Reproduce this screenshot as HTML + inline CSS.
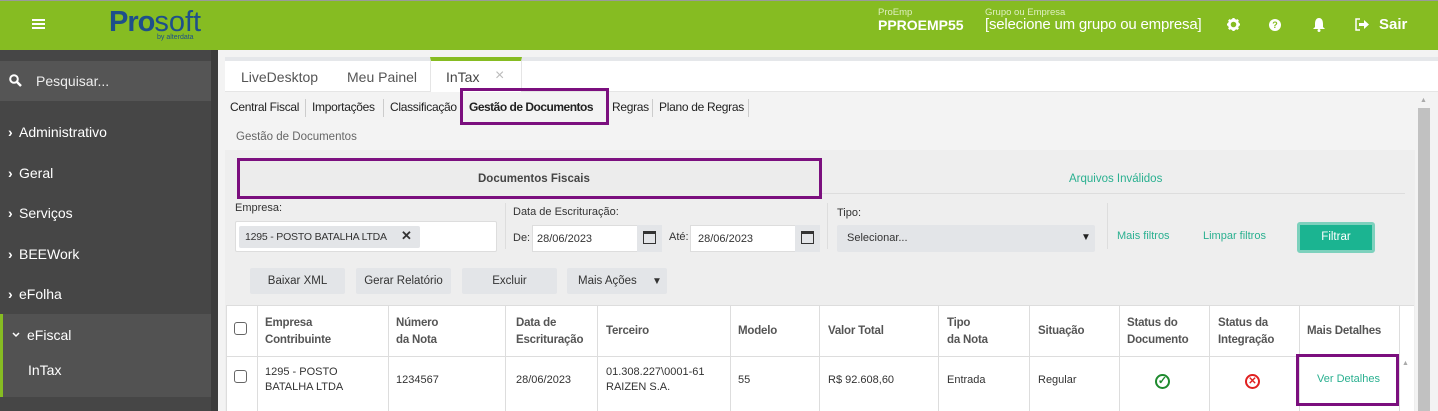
<!DOCTYPE html>
<html><head><meta charset="utf-8"><style>
*{margin:0;padding:0;box-sizing:border-box}
body{width:1438px;height:411px;overflow:hidden;position:relative;font-family:"Liberation Sans",sans-serif;background:#f3f3f3;color:#333}
.a{position:absolute}
.hdr{left:0;top:0;width:1438px;height:50px;background:#86bc22;border-top:1px solid #9a9a9a}
.side{left:0;top:50px;width:211px;height:361px;background:#464646}
.strip{left:211px;top:50px;width:7px;height:361px;background:#3c3c3c}
.nav{left:8px;color:#fff;font-size:14px}
.nav b{display:inline-block;width:11px;font-size:14px}
.w{color:#fff}
.sub{font-size:12px;color:#222;top:100px;letter-spacing:-0.3px}
.sep{width:1px;height:18px;background:#ccc;top:99px}
.th{font-size:11.5px;font-weight:bold;color:#555;line-height:17px;letter-spacing:-0.2px}
.td{font-size:11px;color:#333;line-height:15px}
.vl{width:1px;background:#ddd;top:305px;height:106px}
.btn{background:#e3e5e8;font-size:11.5px;color:#333;text-align:center;line-height:26px;height:26px;top:268px;border-radius:2px}
.cb{width:13px;height:13px;border:1px solid #666;border-radius:3px;background:#fff}
</style></head><body>
<div class="a hdr"></div>
<div class="a" style="left:32px;top:19px;width:13px;height:2px;background:#fff;box-shadow:0 4px 0 #fff,0 8px 0 #fff"></div>
<div class="a" style="left:109px;top:6px;font-size:29px;font-weight:bold;color:#1e4f8a;letter-spacing:-1px">Pro<span style="font-weight:normal;color:#1e4f8a;letter-spacing:0">soft</span></div>
<div class="a" style="left:157px;top:34px;font-size:7px;color:#1e4f8a">by alterdata</div>
<div class="a" style="left:878px;top:7px;font-size:9.5px;color:#dfefc0">ProEmp</div>
<div class="a w" style="left:878px;top:17px;font-size:14px;font-weight:bold">PPROEMP55</div>
<div class="a" style="left:985px;top:7px;font-size:9.5px;color:#dfefc0">Grupo ou Empresa</div>
<div class="a w" style="left:985px;top:16px;font-size:15px;letter-spacing:-0.2px">[selecione um grupo ou empresa]</div>
<svg class="a" style="left:1227px;top:18px" width="13" height="13" viewBox="0 0 14 14"><circle cx="7" cy="7" r="4.5" fill="none" stroke="#fff" stroke-width="3"/><path d="M7 0v3M7 11v3M0 7h3M11 7h3M2 2l2 2M10 10l2 2M2 12l2-2M10 4l2-2" stroke="#fff" stroke-width="2.5"/></svg>
<div class="a" style="left:1269px;top:19px;width:12px;height:12px;border-radius:50%;background:#fff;color:#86bc22;font-size:9px;font-weight:bold;text-align:center;line-height:12px">?</div>
<svg class="a" style="left:1313px;top:17px" width="12" height="15" viewBox="0 0 12 15"><path d="M6 1C3 1 2 4 2 7v3L0 12h12l-2-2V7c0-3-1-6-4-6z" fill="#fff"/><circle cx="6" cy="13.5" r="1.5" fill="#fff"/></svg>
<svg class="a" style="left:1355px;top:18px" width="14" height="13" viewBox="0 0 14 13"><path d="M5 1H1v11h4" fill="none" stroke="#fff" stroke-width="1.5"/><path d="M4 5h5V2l5 4.5L9 11V8H4z" fill="#fff"/></svg>
<div class="a w" style="left:1379px;top:16px;font-size:15px;font-weight:bold">Sair</div>

<div class="a side"></div><div class="a strip"></div>
<div class="a" style="left:0;top:61px;width:211px;height:40px;background:#555"></div>
<svg class="a" style="left:9px;top:74px" width="13" height="13" viewBox="0 0 13 13"><circle cx="5" cy="5" r="3.8" fill="none" stroke="#fff" stroke-width="2"/><path d="M8 8l4 4" stroke="#fff" stroke-width="2.5"/></svg>
<div class="a" style="left:36px;top:73px;font-size:14px;color:#eee">Pesquisar...</div>
<div class="a nav" style="top:124px"><b>›</b>Administrativo</div>
<div class="a nav" style="top:165px"><b>›</b>Geral</div>
<div class="a nav" style="top:205px"><b>›</b>Serviços</div>
<div class="a nav" style="top:246px"><b>›</b>BEEWork</div>
<div class="a nav" style="top:286px"><b>›</b>eFolha</div>
<div class="a" style="left:0;top:314px;width:211px;height:83px;background:#525252;border-left:3px solid #86bc22"></div>
<svg class="a" style="left:12px;top:332px" width="8" height="6" viewBox="0 0 8 6"><path d="M1 1l3 3 3-3" fill="none" stroke="#fff" stroke-width="1.5"/></svg>
<div class="a nav" style="top:327px;left:27px">eFiscal</div>
<div class="a nav" style="top:362px;left:28px">InTax</div>

<div class="a" style="left:225px;top:57px;width:1213px;height:35px;background:#fff;border-top:4px solid #e5e7ea;border-bottom:1px solid #e5e5e5"></div>
<div class="a" style="left:430px;top:57px;width:92px;height:35px;background:#fff;border-top:4px solid #86bc22;border-left:1px solid #e5e5e5;border-right:1px solid #e5e5e5"></div>
<div class="a" style="left:241px;top:69px;font-size:14px;color:#555">LiveDesktop</div>
<div class="a" style="left:347px;top:69px;font-size:14px;color:#555">Meu Painel</div>
<div class="a" style="left:446px;top:69px;font-size:14px;color:#444">InTax</div>
<div class="a" style="left:495px;top:67px;font-size:16px;color:#bbb">×</div>

<div class="a sub" style="left:230px">Central Fiscal</div><div class="a sep" style="left:305px"></div>
<div class="a sub" style="left:312px">Importações</div><div class="a sep" style="left:383px"></div>
<div class="a sub" style="left:390px">Classificação</div>
<div class="a sub" style="left:469px;font-weight:bold;letter-spacing:-0.5px">Gestão de Documentos</div><div class="a sep" style="left:607px"></div>
<div class="a sub" style="left:612px">Regras</div><div class="a sep" style="left:652px"></div>
<div class="a sub" style="left:659px">Plano de Regras</div><div class="a sep" style="left:748px"></div>
<div class="a" style="left:460px;top:88px;width:149px;height:37px;border:3px solid #7b0f7e"></div>
<div class="a" style="left:236px;top:131px;font-size:11.5px;color:#666">Gestão de Documentos</div>

<div class="a" style="left:225px;top:150px;width:1190px;height:261px;background:#eeeeee"></div>
<div class="a" style="left:1418px;top:108px;width:12px;height:303px;background:#c1c1c1"></div>
<div class="a" style="left:1420px;top:97px;font-size:7px;color:#aaa">▲</div>
<div class="a" style="left:237px;top:193px;width:1168px;height:1px;background:#ddd"></div>
<div class="a" style="left:237px;top:158px;width:585px;height:41px;border:3px solid #7b0f7e;background:#ececec"></div>
<div class="a" style="left:478px;top:173px;font-size:11.5px;font-weight:bold;color:#444">Documentos Fiscais</div>
<div class="a" style="left:1069px;top:173px;font-size:11.5px;color:#2ab090">Arquivos Inválidos</div>

<div class="a" style="left:235px;top:202px;font-size:11px;color:#333">Empresa:</div>
<div class="a" style="left:235px;top:221px;width:262px;height:31px;background:#fff;border:1px solid #ddd;border-radius:2px"></div>
<div class="a" style="left:239px;top:226px;width:181px;height:22px;background:#e3e5e8;border-radius:2px"></div>
<div class="a" style="left:245px;top:231px;font-size:10.5px;color:#333;letter-spacing:-0.2px">1295 - POSTO BATALHA LTDA</div>
<div class="a" style="left:401px;top:228px;font-size:13px;font-weight:bold;color:#333">✕</div>
<div class="a" style="left:505px;top:203px;width:1px;height:46px;background:#ddd"></div>
<div class="a" style="left:513px;top:206px;font-size:11px;color:#333">Data de Escrituração:</div>
<div class="a" style="left:513px;top:232px;font-size:11px;color:#333">De:</div>
<div class="a" style="left:532px;top:225px;width:106px;height:27px;background:#fff;border:1px solid #ddd"></div>
<div class="a" style="left:537px;top:233px;font-size:11px;color:#333">28/06/2023</div>
<div class="a" style="left:637px;top:225px;width:25px;height:27px;background:#e3e5e8"></div>
<div class="a" style="left:643px;top:231px;width:13px;height:13px;border:1.5px solid #333;border-top-width:3px"></div>
<div class="a" style="left:669px;top:231px;font-size:11px;color:#333">Até:</div>
<div class="a" style="left:690px;top:225px;width:106px;height:27px;background:#fff;border:1px solid #ddd"></div>
<div class="a" style="left:698px;top:233px;font-size:11px;color:#333">28/06/2023</div>
<div class="a" style="left:795px;top:225px;width:25px;height:27px;background:#e3e5e8"></div>
<div class="a" style="left:801px;top:231px;width:13px;height:13px;border:1.5px solid #333;border-top-width:3px"></div>
<div class="a" style="left:827px;top:203px;width:1px;height:46px;background:#ddd"></div>
<div class="a" style="left:837px;top:207px;font-size:11px;color:#333">Tipo:</div>
<div class="a" style="left:837px;top:225px;width:258px;height:27px;background:#e3e5e8;border-radius:2px"></div>
<div class="a" style="left:847px;top:232px;font-size:11px;color:#333">Selecionar...</div>
<div class="a" style="left:1081px;top:232px;font-size:10px;color:#222">▼</div>
<div class="a" style="left:1107px;top:203px;width:1px;height:46px;background:#ddd"></div>
<div class="a" style="left:1117px;top:230px;font-size:11px;color:#2ab090">Mais filtros</div>
<div class="a" style="left:1203px;top:230px;font-size:11px;color:#2ab090">Limpar filtros</div>
<div class="a" style="left:1297px;top:222px;width:78px;height:31px;background:#1bb491;border:3px solid #7dd1bd;border-radius:3px;color:#fff;font-size:11.5px;text-align:center;line-height:25px">Filtrar</div>

<div class="a btn" style="left:250px;width:95px">Baixar XML</div>
<div class="a btn" style="left:356px;width:95px">Gerar Relatório</div>
<div class="a btn" style="left:462px;width:95px">Excluir</div>
<div class="a btn" style="left:567px;width:100px;text-align:left;padding-left:11px">Mais Ações <span style="font-size:10px;margin-left:12px">▼</span></div>

<div class="a" style="left:226px;top:305px;width:1188px;height:106px;background:#fff;border-top:1px solid #ddd;border-left:1px solid #ddd"></div>
<div class="a" style="left:226px;top:356px;width:1174px;height:1px;background:#ddd"></div>
<div class="a vl" style="left:257px"></div><div class="a vl" style="left:388px"></div>
<div class="a vl" style="left:505px"></div><div class="a vl" style="left:597px"></div>
<div class="a vl" style="left:730px"></div><div class="a vl" style="left:819px"></div>
<div class="a vl" style="left:938px"></div><div class="a vl" style="left:1029px"></div>
<div class="a vl" style="left:1119px"></div><div class="a vl" style="left:1209px"></div>
<div class="a vl" style="left:1299px"></div><div class="a vl" style="left:1399px"></div>
<div class="a" style="left:1402px;top:360px;font-size:7px;color:#aaa">▲</div>
<div class="a cb" style="left:234px;top:322px"></div>
<div class="a cb" style="left:234px;top:370px"></div>
<div class="a th" style="left:265px;top:315px">Empresa<br>Contribuinte</div>
<div class="a th" style="left:396px;top:315px">Número<br>da Nota</div>
<div class="a th" style="left:516px;top:315px">Data de<br>Escrituração</div>
<div class="a th" style="left:606px;top:323px">Terceiro</div>
<div class="a th" style="left:738px;top:323px">Modelo</div>
<div class="a th" style="left:828px;top:323px">Valor Total</div>
<div class="a th" style="left:947px;top:315px">Tipo<br>da Nota</div>
<div class="a th" style="left:1038px;top:323px">Situação</div>
<div class="a th" style="left:1127px;top:315px">Status do<br>Documento</div>
<div class="a th" style="left:1218px;top:315px">Status da<br>Integração</div>
<div class="a th" style="left:1307px;top:323px">Mais Detalhes</div>
<div class="a td" style="left:265px;top:365px">1295 - POSTO<br>BATALHA LTDA</div>
<div class="a td" style="left:396px;top:373px">1234567</div>
<div class="a td" style="left:516px;top:373px">28/06/2023</div>
<div class="a td" style="left:606px;top:365px">01.308.227\0001-61<br>RAIZEN S.A.</div>
<div class="a td" style="left:738px;top:373px">55</div>
<div class="a td" style="left:828px;top:373px">R$ 92.608,60</div>
<div class="a td" style="left:947px;top:373px">Entrada</div>
<div class="a td" style="left:1038px;top:373px">Regular</div>
<div class="a" style="left:1155px;top:374px;width:15px;height:15px;border-radius:50%;border:2px solid #1e8a2e;color:#1e8a2e;font-size:11px;font-weight:bold;text-align:center;line-height:11px">✓</div>
<div class="a" style="left:1245px;top:374px;width:15px;height:15px;border-radius:50%;border:2px solid #e02020;color:#e02020;font-size:10px;font-weight:bold;text-align:center;line-height:11px">✕</div>
<div class="a" style="left:1296px;top:354px;width:103px;height:52px;border:3px solid #7b0f7e"></div>
<div class="a" style="left:1317px;top:373px;font-size:11px;color:#2ab090">Ver Detalhes</div>
</body></html>
